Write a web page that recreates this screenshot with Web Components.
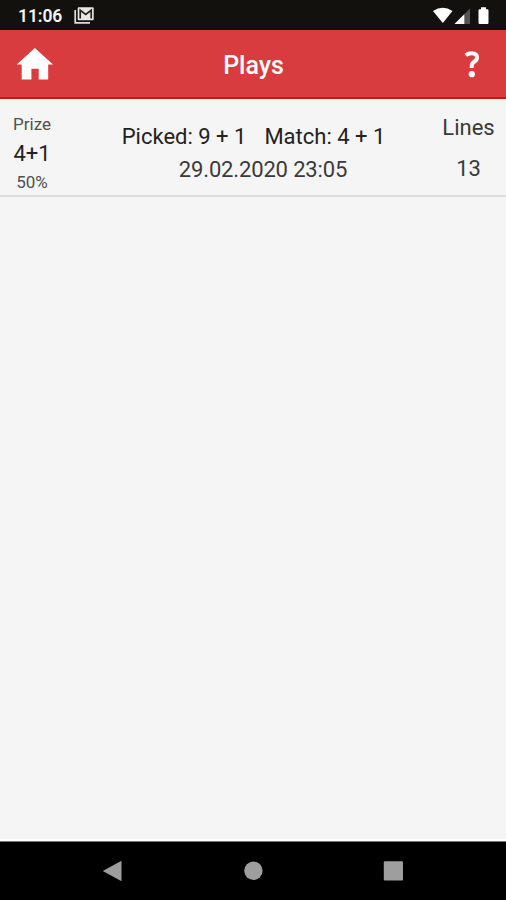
<!DOCTYPE html>
<html lang="en">
<head>
<meta charset="utf-8">
<title>Plays</title>
<style>
    body {
        margin: 0;
        background: #f5f5f5;
        font-family: Roboto, "Liberation Sans", sans-serif;
    }
</style>
</head>
<body>
<plays-screen>
    <status-bar slot="top" time="11:06"></status-bar>
    <app-header slot="top" title="Plays"></app-header>
    <play-row prize="4+1" percent="50%" lines="13">
        <span slot="picked">Picked: 9 + 1</span>
        <span slot="match">Match: 4 + 1</span>
        <span slot="date">29.02.2020 23:05</span>
    </play-row>
    <nav-bar slot="bottom"></nav-bar>
</plays-screen>

<script>
class PlaysScreen extends HTMLElement {
    constructor() {
        super();
        this.attachShadow({ mode: 'open' });
        this.shadowRoot.innerHTML = `
            <style>
                :host {
                    display: flex;
                    flex-direction: column;
                    height: 900px;
                    overflow: hidden;
                }
                main {
                    flex: 1;
                    background: #f5f5f5;
                }
            </style>
            <slot name="top"></slot>
            <main><slot></slot></main>
            <slot name="bottom"></slot>
        `;
    }
}

class StatusBar extends HTMLElement {
    constructor() {
        super();
        this.attachShadow({ mode: 'open' });
        this.shadowRoot.innerHTML = `
            <style>
                :host {
                    display: flex;
                    align-items: center;
                    box-sizing: border-box;
                    height: 30px;
                    padding: 1px 16px 0 18px;
                    background: #12110e;
                    color: #f4f4f2;
                }
                .time {
                    font-size: 17.5px;
                    font-weight: 600;
                    line-height: 28px;
                    width: 56px;
                    letter-spacing: -0.1px;
                }
                .icons {
                    display: flex;
                    margin-left: auto;
                }
                svg {
                    display: block;
                }
            </style>
            <span class="time">${this.getAttribute('time')}</span>
            <svg width="20" height="17" viewBox="0 0 20 17">
                <path d="M1.2 3v12.8H16" fill="none" stroke="#deded9" stroke-width="1.7"/>
                <rect x="3.7" y="0.3" width="16" height="13" rx="1" fill="#e8e8e4"/>
                <path d="M6.2 11.5V3.2L11.7 7.4L17.2 3.2V11.5" fill="none" stroke="#22211e" stroke-width="1.7"/>
            </svg>
            <div class="icons">
                <svg width="58" height="18" viewBox="0 0 58 18">
                    <path d="M1 4Q10.8-2.4 20.5 4L10.8 16Z" fill="#fff"/>
                    <path d="M22.5 17L38 1.5V17Z" fill="#555451"/>
                    <path d="M22.5 17L32.3 7.2V17Z" fill="#fff"/>
                    <path d="M49 0.2h5v2h1.3q1.2 0 1.2 1.2V15.8q0 1.2-1.2 1.2H47.7q-1.2 0-1.2-1.2V3.4q0-1.2 1.2-1.2H49Z" fill="#fff"/>
                </svg>
            </div>
        `;
    }
}

class AppHeader extends HTMLElement {
    constructor() {
        super();
        this.attachShadow({ mode: 'open' });
        this.shadowRoot.innerHTML = `
            <style>
                :host {
                    display: grid;
                    grid-template-columns: 68px 1fr 68px;
                    box-sizing: border-box;
                    height: 69px;
                    background: #d93c3e;
                    border-bottom: 2px solid #d01014;
                    box-shadow: 0 1px 0 #fff;
                    position: relative;
                    color: #fff;
                }
                .home {
                    display: block;
                    margin: 17px 0 0 16px;
                }
                h1 {
                    margin: 0;
                    font-size: 25px;
                    font-weight: 500;
                    line-height: 72px;
                    text-align: center;
                    text-indent: 1px;
                }
                .help {
                    display: block;
                    margin: 20px 0 0 25px;
                }
            </style>
            <svg class="home" width="38" height="34" viewBox="0 0 38 34">
                <path d="M18.8 1L37 17.4H32.2V32.5H22.7V21.8H15.4V32.5H5.7V17.4H0.8Z" fill="#fff"/>
            </svg>
            <h1>${this.getAttribute('title')}</h1>
            <svg class="help" width="20" height="30" viewBox="0 0 20 30">
                <path d="M2.7 5.2Q5.2 3.2 8.8 3.2Q14 3.3 14 7.5Q14 10 11.2 11.8Q8.7 13.3 8.7 16.2V18" fill="none" stroke="#fff" stroke-width="4"/>
                <circle cx="8.8" cy="24.2" r="3.1" fill="#fff"/>
            </svg>
        `;
    }
}

class PlayRow extends HTMLElement {
    constructor() {
        super();
        this.attachShadow({ mode: 'open' });
        this.shadowRoot.innerHTML = `
            <style>
                :host {
                    display: grid;
                    grid-template-columns: 64px 1fr 75px;
                    box-sizing: border-box;
                    height: 98px;
                    border-bottom: 2px solid #dcdcdc;
                    font-size: 22px;
                    text-align: center;
                    color: #222;
                }
                .prize {
                    padding-top: 11px;
                    line-height: 29px;
                }
                .prize small {
                    display: block;
                    font-size: 17px;
                    color: #505050;
                }
                .details {
                    padding: 21px 0 0 11px;
                    line-height: 33px;
                    white-space: nowrap;
                }
                .numbers {
                    display: flex;
                    justify-content: center;
                    gap: 18px;
                    padding-left: 1px;
                }
                .date {
                    color: #3a3a3a;
                    padding-left: 20px;
                    letter-spacing: -0.15px;
                }
                .lines {
                    padding-top: 8px;
                    line-height: 41px;
                    color: #3a3a3a;
                }
            </style>
            <div class="prize">
                <small>Prize</small>
                <div>${this.getAttribute('prize')}</div>
                <small>${this.getAttribute('percent')}</small>
            </div>
            <div class="details">
                <div class="numbers">
                    <slot name="picked"></slot>
                    <slot name="match"></slot>
                </div>
                <div class="date"><slot name="date"></slot></div>
            </div>
            <div class="lines">
                <div>Lines</div>
                <div>${this.getAttribute('lines')}</div>
            </div>
        `;
    }
}

class NavBar extends HTMLElement {
    constructor() {
        super();
        this.attachShadow({ mode: 'open' });
        this.shadowRoot.innerHTML = `
            <style>
                :host {
                    display: flex;
                    justify-content: space-between;
                    align-items: center;
                    box-sizing: border-box;
                    height: 61px;
                    padding: 0 102px;
                    background: #000;
                    border-top: 2px solid #fff;
                    box-shadow: inset 0 1px 0 #777;
                }
                svg {
                    display: block;
                    fill: #9e9e9e;
                }
            </style>
            <svg width="22" height="22" viewBox="0 0 22 22"><path d="M0.8 11L19.5 0.7V21.3Z"/></svg>
            <svg width="22" height="22" viewBox="0 0 22 22"><circle cx="11.4" cy="10.8" r="9.2"/></svg>
            <svg width="22" height="22" viewBox="0 0 22 22"><rect x="1.8" y="1.3" width="19.2" height="19.2" rx="1"/></svg>
        `;
    }
}

customElements.define('plays-screen', PlaysScreen);
customElements.define('status-bar', StatusBar);
customElements.define('app-header', AppHeader);
customElements.define('play-row', PlayRow);
customElements.define('nav-bar', NavBar);
</script>
</body>
</html>
